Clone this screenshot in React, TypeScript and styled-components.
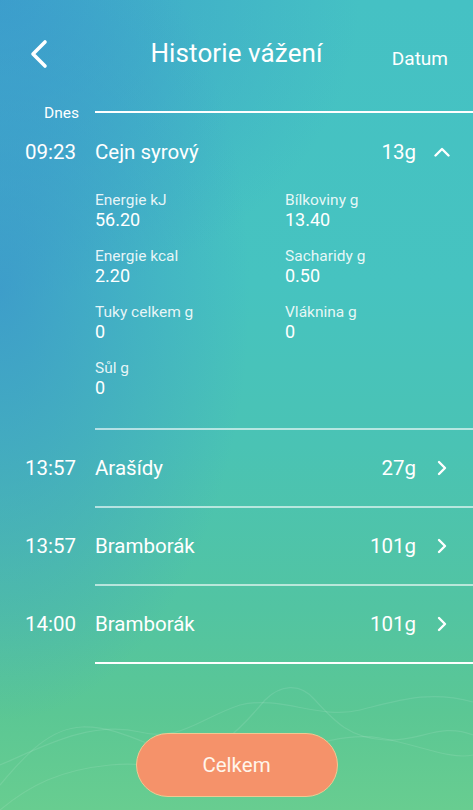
import React from "react";
import styled, { createGlobalStyle } from "styled-components";

const GlobalStyle = createGlobalStyle`
  html, body { margin: 0; padding: 0; }
  body { font-family: Roboto, "Noto Sans", Arial, sans-serif; }
  * { box-sizing: border-box; }
`;

const Screen = styled.div`
  position: relative;
  width: 473px;
  height: 810px;
  overflow: hidden;
  display: flex;
  flex-direction: column;
  color: #fff;
  font-family: Roboto, "Noto Sans", Arial, sans-serif;
  background:
    radial-gradient(ellipse 250px 430px at 0% 36%, rgba(58, 142, 206, 0.7), rgba(58, 142, 206, 0) 100%),
    radial-gradient(ellipse 360px 300px at 0% 0%, rgba(58, 152, 206, 0.75), rgba(58, 152, 206, 0) 100%),
    linear-gradient(180deg, #45c1c4 0%, #46c3c0 35%, #4ac3b4 55%, #52c4a2 75%, #5bc794 88%, #68cd90 100%);
`;

const Waves = styled.svg`
  position: absolute;
  left: 0;
  bottom: 0;
  width: 473px;
  height: 150px;
  pointer-events: none;
`;

const Header = styled.header`
  position: relative;
  display: grid;
  grid-template-columns: 1fr auto 1fr;
  padding-top: 38px;
  height: 68px;
`;

const BackButton = styled.button`
  justify-self: start;
  align-self: start;
  margin: 1px 0 0 29px;
  padding: 0;
  border: 0;
  background: none;
  width: 20px;
  height: 30px;
  display: flex;
`;

const Title = styled.h1`
  margin: 0;
  font-size: 26px;
  font-weight: 400;
  line-height: 30px;
  letter-spacing: 0.1px;
`;

const DateButton = styled.div`
  justify-self: end;
  align-self: start;
  margin: 6px 25px 0 0;
  font-size: 19px;
  line-height: 30px;
`;

const SectionHeader = styled.div`
  display: flex;
  align-items: center;
  height: 20px;
  margin-top: 35px;
`;

const SectionLabel = styled.span`
  width: 95px;
  padding-left: 44px;
  font-size: 15.5px;
  line-height: 20px;
`;

const Divider = styled.div<{ $strong?: boolean }>`
  height: 2px;
  margin-left: 95px;
  background: ${(p) => (p.$strong ? "#ffffff" : "rgba(255,255,255,0.6)")};
`;

const SectionLine = styled.div`
  flex: 1;
  height: 2px;
  margin-bottom: 2px;
  background: #ffffff;
`;

const Row = styled.div<{ $expanded?: boolean }>`
  display: flex;
  align-items: center;
  height: ${(p) => (p.$expanded ? "58px" : "76px")};
  font-size: 20.5px;
  line-height: 24px;
`;

const Time = styled.span`
  width: 95px;
  padding-left: 25px;
`;

const Name = styled.span`
  flex: 1;
`;

const Weight = styled.span`
  text-align: right;
`;

const Chevron = styled.span`
  width: 20px;
  height: 20px;
  margin: 0 21px 0 16px;
  display: flex;
  align-items: center;
  justify-content: center;
`;

const Details = styled.div`
  display: grid;
  grid-template-columns: 190px 1fr;
  margin-left: 95px;
  padding: 10px 0 13px;
`;

const Nutrient = styled.div`
  display: flex;
  flex-direction: column;
  margin-bottom: 16px;
`;

const NutrientLabel = styled.span`
  font-size: 15.5px;
  line-height: 18px;
  color: rgba(255, 255, 255, 0.88);
`;

const NutrientValue = styled.span`
  font-size: 18px;
  line-height: 22px;
`;

const Footer = styled.div`
  display: flex;
  justify-content: center;
  padding-top: 69px;
  position: relative;
`;

const TotalButton = styled.button`
  width: 202px;
  height: 64px;
  border-radius: 32px;
  border: 1px solid #f1c891;
  background: #f5926a;
  color: #fff5ea;
  font-family: Roboto, "Noto Sans", Arial, sans-serif;
  font-size: 20.5px;
  padding: 0;
`;

const ChevronIcon = ({ dir }: { dir: "up" | "right" }) =>
  dir === "up" ? (
    <svg width="16" height="10" viewBox="0 0 16 10">
      <path d="M1.5 8.5 L8 2 L14.5 8.5" fill="none" stroke="#fff" strokeWidth="2.4" strokeLinecap="round" strokeLinejoin="round" />
    </svg>
  ) : (
    <svg width="10" height="16" viewBox="0 0 10 16">
      <path d="M2 2 L8 8 L2 14" fill="none" stroke="#fff" strokeWidth="2.4" strokeLinecap="round" strokeLinejoin="round" />
    </svg>
  );

type Entry = { time: string; name: string; weight: string; expanded?: boolean };

const entries: Entry[] = [
  { time: "09:23", name: "Cejn syrový", weight: "13g", expanded: true },
  { time: "13:57", name: "Arašídy", weight: "27g" },
  { time: "13:57", name: "Bramborák", weight: "101g" },
  { time: "14:00", name: "Bramborák", weight: "101g" },
];

const nutrients = [
  ["Energie kJ", "56.20"],
  ["Bílkoviny g", "13.40"],
  ["Energie kcal", "2.20"],
  ["Sacharidy g", "0.50"],
  ["Tuky celkem g", "0"],
  ["Vláknina g", "0"],
  ["Sůl g", "0"],
];

export default function App() {
  return (
    <>
      <GlobalStyle />
      <Screen>
        <Waves viewBox="0 0 473 150">
          <g fill="none" stroke="rgba(255,255,255,0.1)" strokeWidth="1.2">
            <path d="M0 125 C25 95 50 68 82 67 C120 66 150 88 180 95 C210 100 240 70 265 40 C280 25 300 22 315 40 C335 62 350 78 385 80 C420 82 440 62 473 75" />
            <path d="M0 105 C40 88 90 60 140 72 C180 82 200 58 240 45 C280 35 320 60 360 50 C400 40 430 30 473 42" />
            <path d="M0 150 C30 125 60 110 110 105 C160 100 190 118 230 110 C280 100 330 70 380 78 C420 85 450 100 473 95" />
          </g>
        </Waves>
        <Header>
          <BackButton aria-label="Zpět">
            <svg width="20" height="30" viewBox="0 0 20 30">
              <path d="M16 3 L4 15 L16 27" fill="none" stroke="#fff" strokeWidth="3.6" strokeLinecap="round" strokeLinejoin="round" />
            </svg>
          </BackButton>
          <Title>Historie vážení</Title>
          <DateButton>Datum</DateButton>
        </Header>
        <SectionHeader>
          <SectionLabel>Dnes</SectionLabel>
          <SectionLine />
        </SectionHeader>
        {entries.map((e, i) => (
          <React.Fragment key={i}>
            <Row $expanded={e.expanded}>
              <Time>{e.time}</Time>
              <Name>{e.name}</Name>
              <Weight>{e.weight}</Weight>
              <Chevron>
                <ChevronIcon dir={e.expanded ? "up" : "right"} />
              </Chevron>
            </Row>
            {e.expanded && (
              <Details>
                {nutrients.map(([label, value]) => (
                  <Nutrient key={label}>
                    <NutrientLabel>{label}</NutrientLabel>
                    <NutrientValue>{value}</NutrientValue>
                  </Nutrient>
                ))}
              </Details>
            )}
            <Divider $strong={i === entries.length - 1} />
          </React.Fragment>
        ))}
        <Footer>
          <TotalButton>Celkem</TotalButton>
        </Footer>
      </Screen>
    </>
  );
}
